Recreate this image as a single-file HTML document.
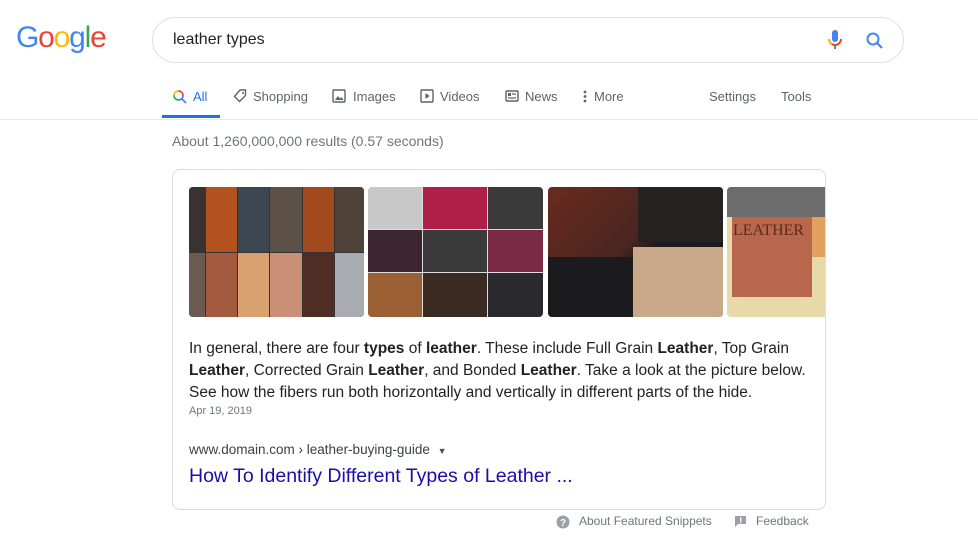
<!DOCTYPE html>
<html><head><meta charset="utf-8"><style>
*{margin:0;padding:0;box-sizing:border-box}
body{width:978px;height:539px;overflow:hidden;background:#fff;font-family:"Liberation Sans",Arial,sans-serif;position:relative;color:#202124}
.a{position:absolute;white-space:nowrap}
.logo{left:16px;top:21px;font-size:30px;letter-spacing:-1.2px;font-family:"Liberation Sans",sans-serif}
.search{left:152px;top:17px;width:752px;height:46px;border:1px solid #dfe1e5;border-radius:23px}
.tab{top:89px;font-size:13px;color:#5f6368}
.line{left:0;top:119px;width:978px;height:1px;background:#ebebeb}
.card{left:172px;top:169px;width:654px;height:341px;border:1px solid #dadce0;border-radius:8px;overflow:hidden}
.img{position:absolute;top:187px;height:130px;overflow:hidden;border-radius:4px}
.t{font-size:15.5px;color:#222;left:189px}
b{font-weight:bold}
</style></head><body>
<div class="a logo"><span style="color:#4285f4">G</span><span style="color:#ea4335">o</span><span style="color:#fbbc05">o</span><span style="color:#4285f4">g</span><span style="color:#34a853">l</span><span style="color:#ea4335">e</span></div>
<div class="a search"></div>
<div class="a" style="left:173px;top:31px;font-size:16px;color:#222">leather types</div>
<svg class="a" style="left:826px;top:29px" width="18" height="22" viewBox="0 0 18 22"><rect x="6" y="1" width="6" height="12" rx="3" fill="#4285f4"/><path d="M3 10a6 6 0 0 0 12 0" stroke="#ea4335" stroke-width="2" fill="none"/><path d="M3 10a6 6 0 0 0 3 5" stroke="#fbbc05" stroke-width="2" fill="none"/><rect x="8" y="16" width="2" height="4" fill="#34a853"/></svg>
<svg class="a" style="left:865px;top:31px" width="20" height="20" viewBox="0 0 20 20"><circle cx="8" cy="8" r="5.5" stroke="#4285f4" stroke-width="2" fill="none"/><path d="M12 12l5 5" stroke="#4285f4" stroke-width="2.2"/></svg>

<svg class="a" style="left:172px;top:89px" width="16" height="16" viewBox="0 0 16 16"><path d="M6.5 2a4.5 4.5 0 0 1 4.5 4.5" stroke="#ea4335" stroke-width="1.7" fill="none"/><path d="M6.5 2a4.5 4.5 0 0 0-4.5 4.5" stroke="#fbbc05" stroke-width="1.7" fill="none"/><path d="M2 6.5a4.5 4.5 0 0 0 4.5 4.5" stroke="#34a853" stroke-width="1.7" fill="none"/><path d="M11 6.5a4.5 4.5 0 0 1-4.5 4.5M10 10l4 4" stroke="#4285f4" stroke-width="1.7" fill="none"/></svg>
<div class="a tab" style="left:193px;color:#1a73e8">All</div>
<div class="a" style="left:162px;top:115px;width:58px;height:3px;background:#1a73e8"></div>
<svg class="a" style="left:233px;top:89px" width="14" height="14" viewBox="0 0 14 14"><path d="M7 1h5.5v5.5L6.5 12.5 1.5 7.5z" stroke="#5f6368" stroke-width="1.4" fill="none"/><circle cx="10" cy="4" r="1" fill="#5f6368"/></svg>
<div class="a tab" style="left:253px">Shopping</div>
<svg class="a" style="left:332px;top:89px" width="14" height="14"><rect x="1" y="1" width="12" height="12" rx="1" stroke="#5f6368" stroke-width="1.4" fill="none"/><path d="M3 11l3-4 2 2.5 1.5-1.5 2 3z" fill="#5f6368"/></svg>
<div class="a tab" style="left:353px">Images</div>
<svg class="a" style="left:420px;top:89px" width="14" height="14"><rect x="1" y="1" width="12" height="12" rx="1" stroke="#5f6368" stroke-width="1.4" fill="none"/><path d="M5.5 4v6l4-3z" fill="#5f6368"/></svg>
<div class="a tab" style="left:440px">Videos</div>
<svg class="a" style="left:505px;top:90px" width="14" height="12"><rect x="1" y="1" width="12" height="10" rx="1" stroke="#5f6368" stroke-width="1.4" fill="none"/><rect x="3" y="3" width="3" height="3" fill="#5f6368"/><path d="M7 4h4M3 8h8" stroke="#5f6368" stroke-width="1.2"/></svg>
<div class="a tab" style="left:525px">News</div>
<svg class="a" style="left:583px;top:90px" width="4" height="13"><circle cx="2" cy="2" r="1.4" fill="#5f6368"/><circle cx="2" cy="6.5" r="1.4" fill="#5f6368"/><circle cx="2" cy="11" r="1.4" fill="#5f6368"/></svg>
<div class="a tab" style="left:594px">More</div>
<div class="a tab" style="left:709px">Settings</div>
<div class="a tab" style="left:781px">Tools</div>
<div class="a line"></div>
<div class="a" style="left:172px;top:133px;font-size:14px;color:#70757a">About 1,260,000,000 results (0.57 seconds)</div>

<div class="a card"></div>
<div class="img" style="left:189px;width:175px">
 <div style="display:grid;grid-template-columns:16px 31px 31px 32px 31px 34px;grid-template-rows:65px 65px;gap:1px;height:130px;background:#333">
  <div style="background:#3a3230"></div><div style="background:#b3521f"></div><div style="background:#3b4650"></div><div style="background:#5c5046"></div><div style="background:#a24a1e"></div><div style="background:#4e4238"></div>
  <div style="background:#6b5a52"></div><div style="background:#a45a3e"></div><div style="background:#d9a070"></div><div style="background:#c98f77"></div><div style="background:#4f2d24"></div><div style="background:#a8acb2"></div>
 </div></div>
<div class="img" style="left:368px;width:175px">
 <div style="display:grid;grid-template-columns:54px 64px 55px;grid-template-rows:42px 42px 44px;gap:1px;height:130px;background:#ddd">
  <div style="background:#c8c8c8"></div><div style="background:#b01f48"></div><div style="background:#3a3a3a"></div>
  <div style="background:#3e2630"></div><div style="background:#3a3a3a"></div><div style="background:#7a2a45"></div>
  <div style="background:#9a6034"></div><div style="background:#3a2a22"></div><div style="background:#2a2a2e"></div>
 </div></div>
<div class="img" style="left:548px;width:175px;background:linear-gradient(135deg,#6a2a1e 0%,#4a2620 45%,#1c1a1c 55%,#1a1a1a 100%)">
 <div style="position:absolute;left:85px;top:60px;width:90px;height:70px;background:#c9a98a"></div>
 <div style="position:absolute;left:90px;top:0;width:85px;height:55px;background:#262222"></div>
 <div style="position:absolute;left:0;top:70px;width:85px;height:60px;background:#1b1b1d"></div>
</div>
<div class="img" style="left:727px;width:98px;border-radius:4px 0 0 4px;background:#e8d9a8">
 <div style="position:absolute;left:0;top:0;width:98px;height:30px;background:#6d6c6c"></div>
 <div style="position:absolute;left:5px;top:30px;width:80px;height:80px;background:#b8674c"></div>
 <div style="position:absolute;left:85px;top:30px;width:13px;height:40px;background:#e0a060"></div>
 <div style="position:absolute;left:6px;top:35px;font-size:16px;color:#5a2a1a;font-family:'Liberation Serif',serif">LEATHER</div>
</div>

<div class="a t" style="top:340px">In general, there are four <b>types</b> of <b>leather</b>. These include Full Grain <b>Leather</b>, Top Grain</div>
<div class="a t" style="top:362px"><b>Leather</b>, Corrected Grain <b>Leather</b>, and Bonded <b>Leather</b>. Take a look at the picture below.</div>
<div class="a t" style="top:384px">See how the fibers run both horizontally and vertically in different parts of the hide.</div>
<div class="a" style="left:189px;top:405px;font-size:11px;color:#70757a">Apr 19, 2019</div>
<div class="a" style="left:189px;top:442px;font-size:13.5px;color:#3c4043">www.domain.com › leather-buying-guide <span style="font-size:9px;margin-left:4px;color:#4d5156">▼</span></div>
<div class="a" style="left:189px;top:465px;font-size:19.5px;color:#1a0dab">How To Identify Different Types of Leather ...</div>

<svg class="a" style="left:556px;top:515px" width="14" height="14"><circle cx="7" cy="7" r="6.5" fill="#9aa0a6"/><text x="7" y="11" font-size="10" text-anchor="middle" fill="#fff" font-family="Liberation Sans" font-weight="bold">?</text></svg>
<div class="a" style="left:579px;top:514px;font-size:12px;color:#70757a">About Featured Snippets</div>
<svg class="a" style="left:734px;top:515px" width="13" height="13"><path d="M1 1h11v8H4l-3 3z" fill="#9aa0a6"/><rect x="6" y="2.5" width="1.4" height="4" fill="#fff"/><rect x="6" y="7" width="1.4" height="1.2" fill="#fff"/></svg>
<div class="a" style="left:756px;top:514px;font-size:12px;color:#70757a">Feedback</div>
</body></html>
